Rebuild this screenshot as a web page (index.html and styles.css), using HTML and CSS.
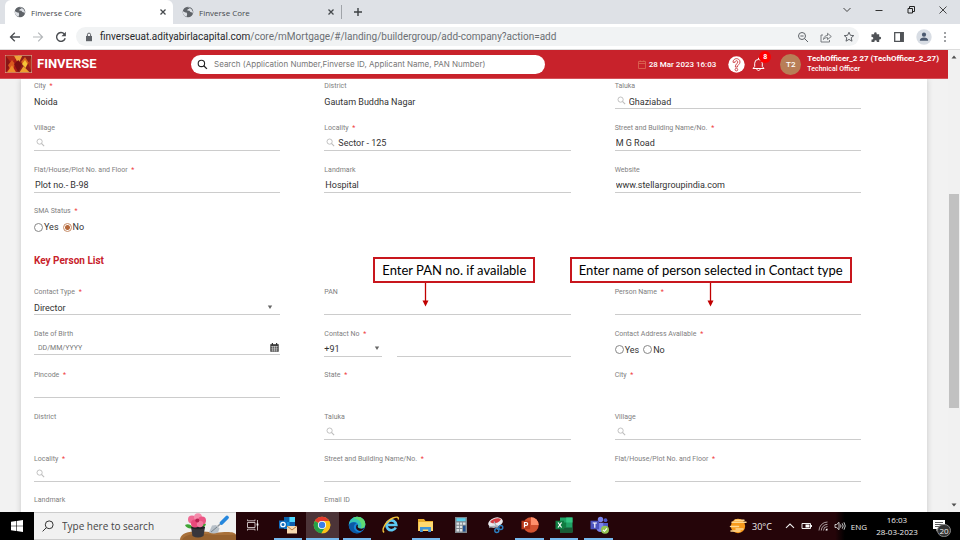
FILE: index.html
```html
<!DOCTYPE html>
<html lang="en">
<head>
<meta charset="utf-8">
<title>Finverse Core</title>
<link rel="stylesheet" href="styles.css">
</head>
<body>
<svg class="defs" width="0" height="0" aria-hidden="true">
  <symbol id="globe" viewBox="0 0 12 12"><circle cx="6" cy="6" r="5.3" fill="#5f6368"/><path d="M1 5.2l2.3 1.2 1.2.2.7 1.5-.6 2.6A5 5 0 0 1 1 5.2zM5 1.2l2.6.2-.4 1.3-1.5.5-.5 1.4 2.2.2 1 1.3 1.7.3.4 1.6 .4-2.6-1.7-2.6z" fill="#dee1e6"/></symbol>
  <symbol id="lens" viewBox="0 0 10 10"><circle cx="4" cy="4" r="2.9" fill="none" stroke="currentColor"/><path d="M6.1 6.1L9 9" stroke="currentColor" stroke-width="1.2"/></symbol>
  <symbol id="caret" viewBox="0 0 6 6"><path d="M.8 1.4h4.4L3 5z" fill="#666"/></symbol>
  <symbol id="close" viewBox="0 0 8 8"><path d="M1.5 1.5l5 5m0-5l-5 5" stroke="#45494d" stroke-width="1.3" fill="none"/></symbol>
</svg>

<nav class="tabs" aria-label="Browser tabs">
  <div class="tab active"><svg class="i12"><use href="#globe"/></svg><span>Finverse Core</span><button aria-label="Close tab"><svg class="i8"><use href="#close"/></svg></button></div>
  <div class="tab"><svg class="i12"><use href="#globe"/></svg><span>Finverse Core</span><button aria-label="Close tab"><svg class="i8"><use href="#close"/></svg></button></div>
  <button class="new-tab" aria-label="New tab"><svg width="10" height="10" viewBox="0 0 10 10"><path d="M5 1v8M1 5h8" stroke="#3c4043" stroke-width="1.4"/></svg></button>
  <div class="window-buttons">
    <button aria-label="Search tabs"><svg width="12" height="12" viewBox="0 0 12 12"><path d="M2.5 4L6 7.5 9.5 4" fill="none" stroke="#444"/></svg></button>
    <button aria-label="Minimize"><svg width="12" height="12" viewBox="0 0 12 12"><path d="M2.5 6.5h7" stroke="#333"/></svg></button>
    <button aria-label="Restore"><svg width="12" height="12" viewBox="0 0 12 12"><path d="M3 4.5h4.5V9H3zM4.5 4.5v-2h5v5h-2" fill="none" stroke="#222"/></svg></button>
    <button aria-label="Close"><svg width="12" height="12" viewBox="0 0 12 12"><path d="M2.5 2.5l7 7m0-7l-7 7" stroke="#333" stroke-width=".9"/></svg></button>
  </div>
</nav>

<div class="toolbar">
  <button aria-label="Back"><svg width="12" height="12" viewBox="0 0 12 12"><path d="M11 6H1.5M5.8 1.7L1.5 6l4.3 4.3" fill="none" stroke="#4a4d51" stroke-width="1.3"/></svg></button>
  <button aria-label="Forward"><svg width="12" height="12" viewBox="0 0 12 12"><path d="M1 6h9.5M6.2 1.7L10.5 6l-4.3 4.3" fill="none" stroke="#b4b7ba" stroke-width="1.2"/></svg></button>
  <button aria-label="Reload"><svg width="12" height="12" viewBox="0 0 12 12"><path d="M10.2 7.3A4.4 4.4 0 1 1 9.3 3" fill="none" stroke="#4a4d51" stroke-width="1.4"/><path d="M10.9.8v4.4H6.5z" fill="#4a4d51"/></svg></button>
  <div class="address">
    <svg width="8" height="10" viewBox="0 0 8 10"><path d="M1 4h6v5.200H1z" fill="#5f6368"/><path d="M2.400 4V2.700a1.600 1.600 0 0 1 3.200 0V4" fill="none" stroke="#5f6368"/></svg>
    <p><b>finverseuat.adityabirlacapital.com</b>/core/mMortgage/#/landing/buildergroup/add-company?action=add</p>
    <button aria-label="Zoom"><svg width="12" height="12" viewBox="0 0 12 12"><circle cx="5" cy="5" r="3.500" fill="none" stroke="#5f6368"/><path d="M7.600 7.600L11 11M3.400 5h3.200" stroke="#5f6368"/></svg></button>
    <button aria-label="Share"><svg width="12" height="12" viewBox="0 0 12 12"><path d="M3 4H1v7h8.500V9M3.500 8.500c.3-2.600 1.800-4 4-4V2.300L11.300 5.500 7.500 8.500V6.600c-1.800 0-3 .5-4 1.900z" fill="none" stroke="#6c7074" stroke-width=".9"/></svg></button>
    <button aria-label="Bookmark"><svg width="12" height="12" viewBox="0 0 12 12"><path d="M6 1.200l1.400 3.100 3.400.3-2.600 2.200.8 3.400-3-1.800-3 1.800.8-3.400L1.200 4.600l3.400-.3z" fill="none" stroke="#5f6368"/></svg></button>
  </div>
  <button aria-label="Extensions"><svg width="12" height="12" viewBox="0 0 12 12"><path d="M1.500 3.300h2.600V2.600a1.300 1.300 0 0 1 2.600 0v.7h2.500v2.500h.6a1.300 1.300 0 0 1 0 2.600h-.6v2.600H6.800v-.6a1.200 1.200 0 0 0-2.400 0v.6H1.500V8.500h.6a1.200 1.200 0 0 0 0-2.400h-.6z" fill="#505357"/></svg></button>
  <button aria-label="Side panel"><svg width="12" height="12" viewBox="0 0 12 12"><path d="M1.700 1.700h8.600v8.600H1.700z" fill="none" stroke="#505357" stroke-width="1.300"/><path d="M7 2h3v8H7z" fill="#505357"/></svg></button>
  <button aria-label="Profile"><svg width="16" height="16" viewBox="0 0 16 16"><circle cx="8" cy="8" r="7.700" fill="#d8dde4"/><circle cx="8" cy="5.700" r="2.100" fill="#4c5a70"/><path d="M3.800 11.800c0-2.400 2-3.200 4.200-3.200s4.200.8 4.200 3.200z" fill="#4c5a70"/></svg></button>
  <button class="menu" aria-label="Menu"><svg width="4" height="12" viewBox="0 0 4 12"><path d="M1.200 1.200h1.600v1.600H1.200zM1.200 5.200h1.600v1.600H1.200zM1.200 9.200h1.600v1.600H1.200z" fill="#5f6368"/></svg></button>
</div>

<div class="viewport">
  <div class="app">
    <header class="app-header">
      <svg class="logo" width="27" height="18" viewBox="0 0 27 18"><path d="M0 0h27v18H0z" fill="#d9a28a"/><path d="M.7.700h12.600v16.600H.7z" fill="#a81a16"/><path d="M13.300.700h13v16.600h-13z" fill="#8e1d1a"/><path d="M.7.700L7 8l6-7.300z" fill="#b8281a"/><path d="M.7.700L6 9 .7 17.300z" fill="#8a1416"/><path d="M7 5l3 4-3 8.300-4-7z" fill="#d9581e"/><path d="M2 17.300l5-7 4 7z" fill="#ee8d2c"/><path d="M9 .7l4.300 8 4-8z" fill="#f0a33a"/><path d="M9 9l4.300-4 3.500 5-3.500 7.300z" fill="#7a0f12"/><path d="M20 2l4 6-4 3-4-4z" fill="#d9661e"/><path d="M20 5l2.500 4-2 4-3.500-4z" fill="#f6c437"/><path d="M14.500 17.300l4-6 6 6z" fill="#eea02f"/><path d="M26.300 2l-3 7 3 7z" fill="#b3301a"/></svg>
      <h1>FINVERSE</h1>
      <label class="search"><svg width="11" height="11"><use href="#lens"/></svg><input type="search" aria-label="Search" placeholder="Search (Application Number,Finverse ID, Applicant Name, PAN Number)"></label>
      <div class="date"><svg width="8" height="9" viewBox="0 0 8 9"><path d="M.5 1.500h7v7h-7zM.5 3.500h7M2.200.3v1.500M5.800.3v1.500" fill="none" stroke="#dc6a55" stroke-width=".8"/></svg><time>28 Mar 2023 16:03</time></div>
      <button class="help" aria-label="Help"><svg width="17" height="17" viewBox="0 0 17 17"><circle cx="8.500" cy="8.500" r="8.200" fill="#fff"/><path d="M5 6.300C5 1.500 12 1.500 12 6c0 2.500-2.600 2.600-2.600 5H7.300c0-3.200 2.500-3.300 2.500-5 0-1.800-2.700-1.800-2.700.3z" fill="#fff" stroke="#cb3a40" stroke-width=".9"/><circle cx="8.400" cy="13.600" r="1.300" fill="#fff" stroke="#cb3a40" stroke-width=".9"/></svg></button>
      <button class="bell" aria-label="Notifications"><svg width="13" height="15" viewBox="0 0 13 15"><path d="M1 11.500l1.700-2V6.200a3.800 3.800 0 0 1 7.600 0v3.300l1.700 2zM4.800 12c.3 2 3.100 2 3.400 0M6.500 2.400V.8" fill="none" stroke="#fff"/></svg><span class="badge">8</span></button>
      <span class="avatar">T2</span>
      <p class="user"><b>TechOfficer_2 27 (TechOfficer_2_27)</b><small>Technical Officer</small></p>
    </header>

    <main>
      <form class="card">
        <section class="fields company">
          <div class="field"><label for="city">City <i>*</i></label><div class="control plain"><input id="city" value="Noida" readonly></div></div>
          <div class="field"><label for="district">District</label><div class="control plain"><input id="district" value="Gautam Buddha Nagar" readonly></div></div>
          <div class="field"><label for="taluka">Taluka</label><div class="control lookup"><svg><use href="#lens"/></svg><input id="taluka" value="Ghaziabad"></div></div>
          <div class="field"><label for="village">Village</label><div class="control lookup"><svg><use href="#lens"/></svg><input id="village"></div></div>
          <div class="field"><label for="locality">Locality <i>*</i></label><div class="control lookup"><svg><use href="#lens"/></svg><input id="locality" value="Sector - 125"></div></div>
          <div class="field"><label for="street">Street and Building Name/No. <i>*</i></label><div class="control"><input id="street" value="M G Road"></div></div>
          <div class="field"><label for="flat">Flat/House/Plot No. and Floor <i>*</i></label><div class="control"><input id="flat" value="Plot no.- B-98"></div></div>
          <div class="field"><label for="landmark">Landmark</label><div class="control"><input id="landmark" value="Hospital"></div></div>
          <div class="field"><label for="website">Website</label><div class="control"><input id="website" value="www.stellargroupindia.com"></div></div>
          <fieldset class="field"><legend>SMA Status <i>*</i></legend><div class="choices"><label><input type="radio" name="sma">Yes</label><label><input type="radio" name="sma" checked>No</label></div></fieldset>
        </section>

        <h2>Key Person List</h2>

        <section class="fields person">
          <div class="field"><label for="ctype">Contact Type <i>*</i></label><div class="control pick"><select id="ctype"><option>Director</option></select><svg><use href="#caret"/></svg></div></div>
          <div class="field"><label for="pan">PAN</label><div class="control"><input id="pan"></div>
            <div class="callout"><p>Enter PAN no. if available</p><svg width="7" height="24" viewBox="0 0 7 24"><path d="M3.500 0v19" stroke="#c00000" stroke-width="1.300"/><path d="M.5 17.500h6l-3 6z" fill="#c00000"/></svg></div></div>
          <div class="field"><label for="pname">Person Name <i>*</i></label><div class="control"><input id="pname"></div>
            <div class="callout name"><p>Enter name of person selected in Contact type</p><svg width="7" height="24" viewBox="0 0 7 24"><path d="M3.500 0v19" stroke="#c00000" stroke-width="1.300"/><path d="M.5 17.500h6l-3 6z" fill="#c00000"/></svg></div></div>
          <div class="field"><label for="dob">Date of Birth</label><div class="control dob"><input id="dob" placeholder="DD/MM/YYYY"><svg width="9" height="9" viewBox="0 0 9 9"><path d="M.3 1.200h8.400v7.500H.3z" fill="#333"/><path d="M.8 3.400h7.400M.8 5.200h7.400M.8 7h7.400M2.700 3v5.500M4.500 3v5.500M6.300 3v5.500" stroke="#fff" stroke-width=".5"/><path d="M2.400 0v2M6.600 0v2" stroke="#333" stroke-width="1.200"/></svg></div></div>
          <div class="field"><label for="phone">Contact No <i>*</i></label><div class="phone"><div class="control pick code"><select aria-label="Country code"><option>+91</option></select><svg><use href="#caret"/></svg></div><div class="control"><input id="phone" type="tel"></div></div></div>
          <fieldset class="field"><legend>Contact Address Available <i>*</i></legend><div class="choices"><label><input type="radio" name="addr">Yes</label><label><input type="radio" name="addr">No</label></div></fieldset>
          <div class="field"><label for="pin">Pincode <i>*</i></label><div class="control"><input id="pin"></div></div>
          <div class="field"><label for="state">State <i>*</i></label><div class="control plain"><input id="state" readonly></div></div>
          <div class="field"><label for="pcity">City <i>*</i></label><div class="control plain"><input id="pcity" readonly></div></div>
          <div class="field"><label for="pdistrict">District</label><div class="control plain"><input id="pdistrict" readonly></div></div>
          <div class="field"><label for="ptaluka">Taluka</label><div class="control lookup"><svg><use href="#lens"/></svg><input id="ptaluka"></div></div>
          <div class="field"><label for="pvillage">Village</label><div class="control lookup"><svg><use href="#lens"/></svg><input id="pvillage"></div></div>
          <div class="field"><label for="plocality">Locality <i>*</i></label><div class="control lookup"><svg><use href="#lens"/></svg><input id="plocality"></div></div>
          <div class="field"><label for="pstreet">Street and Building Name/No. <i>*</i></label><div class="control"><input id="pstreet"></div></div>
          <div class="field"><label for="pflat">Flat/House/Plot No. and Floor <i>*</i></label><div class="control"><input id="pflat"></div></div>
          <div class="field"><label for="plandmark">Landmark</label><div class="control"><input id="plandmark"></div></div>
          <div class="field"><label for="email">Email ID</label><div class="control"><input id="email" type="email"></div></div>
        </section>
      </form>
    </main>
  </div>
  <div class="scrollbar" aria-hidden="true">
    <svg width="6" height="6" viewBox="0 0 6 6"><path d="M.5 4.500h5L3 1.500z" fill="#505050"/></svg>
    <div class="track"><div class="thumb"></div></div>
    <svg width="6" height="6" viewBox="0 0 6 6"><path d="M.5 1.500h5L3 4.500z" fill="#505050"/></svg>
  </div>
</div>

<footer class="taskbar">
  <button class="start" aria-label="Start"><svg width="12" height="12" viewBox="0 0 12 12"><path d="M0 1.700l5-.7v4.700H0zM5.600.9L12 0v5.700H5.600zM0 6.300h5V11l-5-.7zM5.600 6.300H12V12l-6.400-.9z" fill="#fff"/></svg></button>
  <label class="find"><svg width="12" height="12" viewBox="0 0 12 12"><circle cx="7.200" cy="4.800" r="3.900" fill="none" stroke="#333"/><path d="M4.400 7.600L.6 11.400" stroke="#333"/></svg><input aria-label="Type here to search" placeholder="Type here to search"><svg width="56" height="27" viewBox="0 0 56 27"><path d="M0 27c0-5 5-8 14-8.500 9-.6 14 1 22 1 8-.4 20-2 20 3V27z" fill="#a9713a"/><path d="M2 27c2-4 8-6 15-6.500s20 3 39 1V27z" fill="#8c5828" opacity=".6"/><path d="M5 12c3-2 7 0 8 3-3 1-7 0-8-3zM17 14c2-4 6-5 9-3-1 4-5 5-9 3z" fill="#3fa535"/><path d="M11 14h14l-1.500 9q-5.500 3-11 0z" fill="#38363b"/><ellipse cx="18" cy="14.500" rx="7" ry="1.800" fill="#202024"/><circle cx="12" cy="6.500" r="4" fill="#f06a94"/><circle cx="18" cy="4.300" r="4" fill="#f58bab"/><circle cx="22" cy="7.500" r="4" fill="#ec5585"/><circle cx="15" cy="10.500" r="4" fill="#e94a7c"/><circle cx="20" cy="11" r="3.200" fill="#f27aa0"/><circle cx="17.300" cy="7.500" r="2" fill="#b81f50"/><path d="M29 19.500l3-7 4-.5 3.500 3.500-1.500 4q-4 2-9 0z" fill="#b7c0c8"/><path d="M31 19l6-5" stroke="#78838d"/><path d="M37.500 13.500l4-3.500" stroke="#8b939a" stroke-width="1.500"/><path d="M41.500 10l5.500-5.500" stroke="#2687dd" stroke-width="3.800" stroke-linecap="round"/></svg></label>
  <div class="apps">
    <button aria-label="Task view"><svg width="14" height="14" viewBox="0 0 14 14"><path d="M1.500 4.500h7.500v5H1.500zM1.500 1.500v1.300h7.500V1.500M1.500 12.500v-1.300h7.500v1.300M11.500 2v10.500" fill="none" stroke="#d8cfd0" stroke-width=".9"/><path d="M10.600 5.500h1.800v2h-1.800z" fill="#fff"/></svg></button>
    <button class="open" aria-label="Outlook"><svg width="20" height="20" viewBox="0 0 20 20"><path d="M6 2h11v12H6z" fill="#1490df"/><path d="M6 2h5.500v5H6z" fill="#0a64ad"/><path d="M11.500 2H17v5h-5.500z" fill="#50d9ff"/><path d="M11.500 7H17v6h-5.500z" fill="#0e5fae"/><path d="M1 5.500h8v8H1z" fill="#0f6cbd"/><circle cx="5" cy="9.500" r="2.200" fill="none" stroke="#fff" stroke-width="1.300"/><path d="M9 11h10v7.500H9z" fill="#f9dab1"/><path d="M9 11l5 4 5-4" fill="none" stroke="#b87f45"/></svg></button>
    <button class="open current" aria-label="Chrome"><svg width="18" height="18" viewBox="0 0 18 18"><circle cx="9" cy="9" r="8.300" fill="#fbc116"/><path d="M9 9L1.800 4.900A8.300 8.300 0 0 1 16.200 4.900z" fill="#e33b2e"/><path d="M1.800 4.900A8.300 8.300 0 0 0 8.500 17.300L12.500 11z" fill="#26a148"/><path d="M9 9h7L16.200 4.900H9z" fill="#e33b2e"/><path d="M9 4.900h7.200a8.300 8.300 0 0 1-7.700 12.400L12.600 11z" fill="#fbc116"/><circle cx="9" cy="9" r="4.100" fill="#fff"/><circle cx="9" cy="9" r="3.200" fill="#3c7ee9"/></svg></button>
    <button class="open" aria-label="Edge"><svg width="18" height="18" viewBox="0 0 18 18"><circle cx="9" cy="9" r="8.300" fill="#1583d8"/><path d="M.8 8.500C1.300 4 5 .7 9 .7c5 0 8.300 3.500 8.300 7.300 0 3-2.300 4.500-4.700 4.500-2 0-3.300-.8-3-1.700.8-1 .7-2 .3-2.800-1-2.500-6.500-3.300-9.100.5z" fill="#39c4b4"/><path d="M9 .7c5 0 8.300 3.500 8.300 7.300 0 3-2.300 4.500-4.700 4.500 2-2 1.500-9.500-7.600-10.300A8 8 0 0 1 9 .7z" fill="#5fda73"/><path d="M6.500 8.800c-2.200 4 1.500 7.700 6.500 7.400-5 3-11.800.2-12.200-6.700C2 6.500 6 5.500 8.500 7z" fill="#0c59a4"/><path d="M9.600 10.800c.3 1.500 3.400 2.600 6.800 1.300-1.600 2.600-4.200 3.300-6 2.500-2.300-.8-3-3.600-1.400-6 1 .7 1 1.400.6 2.200z" fill="#250509"/></svg></button>
    <button aria-label="Internet Explorer"><svg width="18" height="18" viewBox="0 0 18 18"><path d="M13.800 11.500a4.900 4.900 0 1 1 .5-2.500H5.500" fill="none" stroke="#5cc9f3" stroke-width="2.700"/><path d="M2.200 16.400C-1.500 14.500 4 5 11 2c4-1.700 6-.8 5.300 1.500" fill="none" stroke="#f3c23a" stroke-width="1.400"/></svg></button>
    <button class="open" aria-label="File Explorer"><svg width="18" height="18" viewBox="0 0 18 18"><path d="M1 3h6l1.500 2H16v10H1z" fill="#e9ac2c"/><path d="M1.500 6H16v9H1.500z" fill="#ffd970"/><path d="M3 16v-5h11v5h-2.800v-2.500H5.800V16z" fill="#3f95d8"/></svg></button>
    <button aria-label="Calculator"><svg width="18" height="18" viewBox="0 0 18 18"><path d="M3 1h12v16H3z" fill="#7e878e"/><path d="M4.500 2.200h9v3h-9z" fill="#5bd0ee"/><path d="M4.500 6.500H7v2.300H4.500zM7.800 6.500h2.400v2.300H7.800zM11 6.500h2.500v2.300H11zM4.500 9.700H7V12H4.500zM7.800 9.700h2.400V12H7.800zM4.500 13H7v2.500H4.500zM7.800 13h2.400v2.500H7.800z" fill="#dde2e5"/><path d="M11 9.700h2.500v5.800H11z" fill="#1f4f91"/></svg></button>
    <button aria-label="Snipping Tool"><svg width="18" height="18" viewBox="0 0 18 18"><ellipse cx="9.500" cy="6.500" rx="7.500" ry="4.800" fill="#e9e9ec" transform="rotate(-18 9.500 6.500)"/><path d="M4 6c3-4 9-4.500 11-2.500-3 4-8 5-11 2.500z" fill="#d43a3f"/><path d="M3 11l9-1.200M8 5.500l4 8" stroke="#aab2ba" stroke-width="1.300"/><circle cx="10.800" cy="14.500" r="2" fill="none" stroke="#2c7fc0" stroke-width="1.400"/><circle cx="14.800" cy="11.500" r="2" fill="none" stroke="#2c7fc0" stroke-width="1.400"/></svg></button>
    <button class="open" aria-label="PowerPoint"><svg width="18" height="18" viewBox="0 0 18 18"><circle cx="10" cy="9" r="7.700" fill="#d35230"/><path d="M10 1.300A7.700 7.700 0 0 1 17.700 9H10z" fill="#ff8f6b"/><path d="M.5 4.700h8.600v8.600H.5z" fill="#b9391a"/><path d="M3.500 11.500v-5h1.700a1.400 1.400 0 0 1 0 2.900H3.500" fill="none" stroke="#fff" stroke-width="1.200"/></svg></button>
    <button class="open" aria-label="Excel"><svg width="18" height="18" viewBox="0 0 18 18"><path d="M5 1.500h12.500v15H5z" fill="#21a366"/><path d="M11.200 1.500h6.300v5h-6.300z" fill="#33c481"/><path d="M5 6.500h6.200v5H5z" fill="#107c41"/><path d="M5 11.500h12.500v5H5z" fill="#185c37"/><path d="M.5 4.700h8.600v8.600H.5z" fill="#107c41"/><path d="M3 6.500l3.600 5m0-5l-3.600 5" stroke="#fff" stroke-width="1.200"/></svg></button>
    <button class="open" aria-label="Teams"><svg width="20" height="18" viewBox="0 0 20 18"><circle cx="11.500" cy="3.500" r="2.700" fill="#7b83eb"/><circle cx="16.500" cy="4.200" r="1.900" fill="#5059c9"/><path d="M7.500 6.800H15v5.500c0 5-7.500 5-7.500 0z" fill="#7b83eb"/><path d="M14 7h5v4.500c0 2.500-2 3.200-4 2.800z" fill="#5059c9"/><path d="M1.500 4.700h8.600v8.600H1.500z" fill="#4b53bc"/><path d="M3.700 7h4.200M5.800 7v4.700" stroke="#fff" stroke-width="1.200"/><circle cx="16" cy="13.700" r="4" fill="#92c353"/><path d="M14 13.800l1.500 1.500 2.500-3" fill="none" stroke="#fff" stroke-width="1.100"/></svg></button>
  </div>
  <div class="tray">
    <svg width="18" height="16" viewBox="0 0 18 16"><circle cx="9" cy="8" r="7.200" fill="#f79a1c"/><path d="M3 4.300h14M6 2.300h9M1.500 8.500h8M7 11h7M2 13h9" stroke="#ffd890" stroke-width="1.500" stroke-linecap="round"/></svg>
    <span class="temp">30°C</span>
    <svg width="10" height="10" viewBox="0 0 10 10"><path d="M1 6.800L5 3l4 3.800" fill="none" stroke="#eee" stroke-width="1.100"/></svg>
    <svg width="12" height="10" viewBox="0 0 12 10"><path d="M1 2.500h8.500v5H1zM10.500 4v2" fill="none" stroke="#eee"/><path d="M4.500 3.500h4v3h-4z" fill="#fff"/></svg>
    <svg width="10" height="10" viewBox="0 0 10 10"><path d="M1 9.500A8.500 8.500 0 0 1 9.500 1M3.300 9.500A6.200 6.200 0 0 1 9.500 3.300M5.500 9.500a4 4 0 0 1 4-4" fill="none" stroke="#b9aeb0" stroke-width=".9"/><path d="M9.500 7.500v2h-2a2 2 0 0 1 2-2z" fill="#fff"/></svg>
    <svg width="12" height="10" viewBox="0 0 12 10"><path d="M1 3.500h1.700L5 1.300v7.400L2.700 6.500H1zM6.500 3.500q1 1.500 0 3M8.200 2.300q2 2.700 0 5.400M10 1.300q2.500 3.700 0 7.400" fill="none" stroke="#ddd" stroke-width=".9"/></svg>
    <span>ENG</span>
    <time>16:03<br>28-03-2023</time>
    <div class="notice"><svg width="12" height="12" viewBox="0 0 12 12"><path d="M0 0h12v9H6l-2.500 2.500V9H0z" fill="#fff"/><path d="M2 2.500h8M2 4.500h8M2 6.500h8" stroke="#333" stroke-width=".8"/></svg><span>20</span></div>
  </div>
</footer>
</body>
</html>
```
FILE: styles.css
```css
* { box-sizing: border-box; }

body {
  margin: 0;
  height: 100vh;
  overflow: hidden;
  display: grid;
  grid-template-rows: 24px 26px minmax(0, 1fr) 28px;
  font-family: Roboto, "Liberation Sans", sans-serif;
  font-size: 9px;
  color: #333;
}

button, input, select {
  font: inherit;
  color: inherit;
  margin: 0;
  padding: 0;
  border: 0;
  background: none;
  appearance: none;
  outline: 0;
  min-width: 0;
}

button { display: flex; align-items: center; justify-content: center; }
p, h1, h2 { margin: 0; }
svg { display: block; flex: none; }
.defs { position: absolute; }
.i12 { width: 12px; height: 12px; }
.i8 { width: 8px; height: 8px; }

/* Browser chrome */
.tabs {
  display: flex;
  background: #dee1e6;
  padding-left: 5px;
  font-family: "Open Sans", sans-serif;
  font-size: 8px;
  color: #45494d;
}

.tab {
  display: flex;
  align-items: center;
  gap: 5px;
  width: 168px;
  padding: 0 6px 0 9px;
}

.tab span { flex: 1; }
.tab.active { background: #fff; border-radius: 6px 6px 0 0; }
.new-tab { width: 32px; border-left: 1px solid #a0a4a9; height: 14px; align-self: center; }
.window-buttons { display: flex; margin-left: auto; padding: 0 1px 4px 0; }
.window-buttons button { width: 32px; }

.toolbar {
  display: flex;
  align-items: center;
  gap: 11px;
  padding: 0 13px 0 9px;
  background: #fff;
  border-bottom: 1px solid #ddd;
}

.address {
  flex: 1;
  display: flex;
  align-items: center;
  gap: 11px;
  height: 19px;
  margin-left: -2px;
  padding: 0 4px 0 9px;
  border-radius: 10px;
  background: #f1f3f4;
  font-size: 10px;
  color: #6b6f73;
}

.address p { flex: 1; margin-left: -4px; white-space: nowrap; }
.address b { font-weight: 400; color: #26282b; }

/* Page */
.viewport { display: flex; min-height: 0; background: #f2f2f2; }
.app { flex: 1; display: flex; flex-direction: column; min-width: 0; }

.app-header {
  flex: none;
  display: flex;
  align-items: center;
  height: 29px;
  padding: 0 9px 0 5px;
  background: #c8222b;
  border-bottom: 1px solid #d4525a;
  color: #fff;
}

.app-header h1 { width: 159px; padding-left: 5px; font-size: 13px; line-height: 16px; font-weight: 700; }

.search {
  display: flex;
  align-items: center;
  gap: 6px;
  flex: 0 1 354px;
  height: 19px;
  padding: 0 6px;
  border-radius: 10px;
  background: #fff;
  color: #222;
}

.search input { flex: 1; font-family: Inter, sans-serif; font-size: 8px; color: #666; }
.search input::placeholder { color: #777; opacity: 1; }
.date { display: flex; align-items: center; gap: 3px; margin-left: auto; font-size: 8px; font-weight: 500; }
.help { margin-left: 12px; }
.bell { position: relative; margin: 0 15px 0 7px; }

.badge {
  position: absolute;
  left: 7px;
  top: -6px;
  width: 12px;
  height: 12px;
  border-radius: 50%;
  background: #f00;
  font-size: 7px;
  line-height: 12px;
  font-weight: 700;
  text-align: center;
}

.avatar {
  width: 21px;
  height: 21px;
  border-radius: 50%;
  background: #b87e57;
  font-size: 8px;
  line-height: 21px;
  font-weight: 500;
  text-align: center;
}

.user { margin-left: 6px; font-size: 8px; line-height: 10px; white-space: nowrap; }
.user b { display: block; font-weight: 700; }
.user small { font-size: 7px; font-weight: 500; display: block; }

main { flex: 1; min-height: 0; overflow: hidden; padding: 0 21px; }

.card {
  min-height: 100%;
  padding: 0 66px 0 13px;
  background: #fff;
  box-shadow: 0 0 6px rgba(0, 0, 0, .18);
}

.fields { display: grid; grid-template-columns: repeat(3, minmax(0, 1fr)); column-gap: 44px; }
.company { grid-template-rows: repeat(4, 1fr); min-height: 167px; }
.person { grid-template-rows: repeat(6, 1fr); min-height: 250px; }

.card h2 { padding: 7px 0 16px; font-size: 10px; line-height: 16px; font-weight: 700; color: #c8222b; }

.field { position: relative; min-width: 0; margin: 0; padding: 0; border: 0; }
.field > label, .field > legend { display: block; padding: 0; font-size: 7px; line-height: 14px; color: #808080; }
.field i { color: #f03c3c; font-style: normal; margin-left: 2px; }

.control { display: flex; align-items: center; height: 16px; border-bottom: 1px solid #ccc; padding-left: 1px; }
.control input, .control select { flex: 1; width: 100%; height: 15px; padding-top: 2px; }
.plain { border-color: transparent; padding-left: 0; }
.lookup svg { width: 9px; height: 9px; margin: 0 3px 0 1px; color: #bbb; }
.pick { padding-left: 0; }
.pick svg { width: 6px; height: 6px; margin-right: 7px; }
.dob { height: 14px; padding-left: 4px; font-size: 7px; }
.dob svg { margin-right: 1px; }
.dob input { height: 13px; padding-top: 1px; }
.dob input::placeholder { color: #777; opacity: 1; }
.phone { display: flex; gap: 15px; }
.phone .control { flex: 1; }
.phone .code { flex: none; width: 58px; }
.code svg { margin-right: 2px; }

.choices { display: flex; gap: 4px; height: 18px; align-items: center; }
.choices label { display: flex; align-items: center; gap: 1px; }
.choices input { width: 9px; height: 9px; border: 1px solid #888; border-radius: 50%; }
.choices input:checked { border-color: #c58a64; background: radial-gradient(#b5683a 0 2px, #fff 3px); }

/* Guidance notes over the form */
.callout { position: absolute; left: 49px; top: -28px; color: #000; }
.callout p {
  padding: 0 7px;
  border: 2px solid #c8161d;
  background: #fff;
  font-family: Lato, sans-serif;
  font-size: 13px;
  line-height: 22px;
  white-space: nowrap;
}
.callout svg { margin-left: 49px; }
.callout.name { left: -45px; }
.callout.name svg { margin-left: 137px; }

.scrollbar {
  width: 12px;
  display: flex;
  flex-direction: column;
  align-items: center;
  padding: 4px 0;
  background: #f1f1f1;
}
.track { flex: 1; width: 10px; padding: 134px 0 94px; }
.thumb { height: 100%; background: #c1c1c1; }

/* Windows taskbar */
.taskbar {
  display: flex;
  background: linear-gradient(90deg, #250509 87%, #000 88%);
  color: #eee;
  font-family: "Open Sans", sans-serif;
  font-size: 8px;
}

.start { width: 34px; background: #000; }

.find {
  display: flex;
  align-items: center;
  gap: 8px;
  width: 202px;
  padding-left: 8px;
  background: #f1f1f1;
  border: solid #ccc;
  border-width: 1px 0;
  font-size: 10px;
}

.find input { flex: 1; }
.find input::placeholder { color: #444; opacity: 1; }
.apps { display: grid; grid-template-columns: repeat(11, 1fr); width: 380px; }
.apps button { margin: 0 3px; border-bottom: 2px solid transparent; }
.apps .open { border-color: #76b9ed; }
.apps .current { background: #4c3438; margin: 0 1px; }

.tray {
  display: grid;
  grid-template-columns: 20px 33px 17px 17px 16px 17px 22px 54px 36px;
  align-items: center;
  justify-items: center;
  margin-left: auto;
}

.tray time { line-height: 12px; text-align: center; }
.temp { justify-self: start; padding-left: 4px; font-size: 9px; }
.notice { position: relative; margin-right: 6px; }
.notice span {
  position: absolute;
  left: 4px;
  top: 4px;
  width: 14px;
  height: 13px;
  border: 1px solid #888;
  border-radius: 7px;
  background: #333;
  font-size: 8px;
  line-height: 11px;
  text-align: center;
}
```
